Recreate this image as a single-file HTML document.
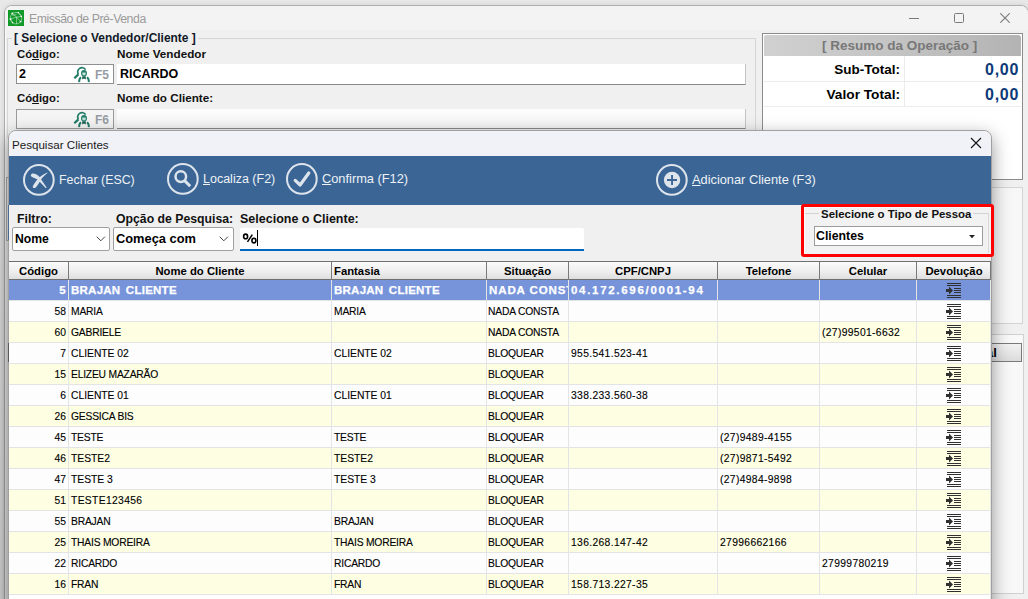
<!DOCTYPE html>
<html><head><meta charset="utf-8">
<style>
*{box-sizing:border-box}
html,body{margin:0;padding:0;width:1028px;height:599px;overflow:hidden;background:#e8e8e8;font-family:"Liberation Sans",sans-serif}
.a{position:absolute}
.t{position:absolute;white-space:nowrap;line-height:1}
.b{font-weight:bold}
#win{position:absolute;left:4px;top:5px;width:1025px;height:600px;background:#f0f0f0;border:1px solid #aeaeae;border-radius:8px 8px 0 0;box-shadow:0 0 5px rgba(0,0,0,0.10),inset 1px 1px 0 #fafafa}
.hd{font-size:11.3px;color:#000}
.cell{font-size:10.3px;color:#000;-webkit-text-stroke:0.12px #000}
.sel{font-size:11.5px;font-weight:bold;color:#fff;letter-spacing:0.25px;-webkit-text-stroke:0.25px #fff}
</style></head><body>
<div id="win"></div>
<div class="a" style="left:5px;top:6px;width:1023px;height:24px;background:#f3f3f3;border-radius:7px 7px 0 0"></div>

<!-- title bar -->
<svg class="a" style="left:8px;top:10px" width="16" height="16" viewBox="0 0 16 16"><rect width="16" height="16" fill="#11992a"/><g stroke="#fff" stroke-opacity="0.55" stroke-width="0.8" fill="none"><circle cx="8" cy="8.2" r="5.8"/><path d="M4.3 3.5L8.5 7L12.5 11.5M10.3 2.5L13.3 6.5L8.5 7L2.5 9L4.5 12.5M8.5 7V14M4.5 5.5L8.5 4.3"/></g><g fill="#fff"><circle cx="4.3" cy="3.5" r="0.9"/><circle cx="10.3" cy="2.6" r="0.8"/><circle cx="13.3" cy="6.5" r="0.8"/><circle cx="2.5" cy="9.2" r="0.9"/><circle cx="12.6" cy="11.6" r="0.9"/><circle cx="4.6" cy="12.6" r="0.8"/></g></svg>
<div class="t" style="left:29px;top:13px;font-size:12.3px;letter-spacing:-0.45px;color:#9b9b9b">Emissão de Pré-Venda</div>

<!-- window controls -->
<div class="a" style="left:909px;top:18px;width:10px;height:1px;background:#7a7a7a"></div>
<div class="a" style="left:954px;top:13px;width:10px;height:10px;border:1px solid #7a7a7a;border-radius:1.5px"></div>
<svg class="a" style="left:1000px;top:13px" width="10" height="10"><path d="M0.3 0.3L9.7 9.7M9.7 0.3L0.3 9.7" stroke="#7a7a7a" stroke-width="1.1"/></svg>

<!-- group box vendedor/cliente -->
<div class="a" style="left:7px;top:38px;width:749px;height:100px;border:1px solid #d6d6d6"></div>
<div class="t b" style="left:12px;top:33px;font-size:11.95px;color:#101828;background:#f0f0f0;padding:0 2px">[ Selecione o Vendedor/Cliente ]</div>

<div class="t b" style="left:17px;top:49px;font-size:11.3px;color:#111">Có<u>d</u>igo:</div>
<div class="t b" style="left:117px;top:48px;font-size:11.7px;color:#111">Nome Vendedor</div>
<div class="a" style="left:16px;top:64px;width:98px;height:20px;background:#fff;border:1px solid #8f8f8f"></div>
<div class="t b" style="left:19px;top:68px;font-size:12.5px;color:#000">2</div>
<svg class="a" style="left:73px;top:65px" width="18" height="18" viewBox="0 0 18 18"><path d="M5.4 9.4A4.3 4.3 0 1 1 12.6 4.6" fill="none" stroke="#1f7a66" stroke-width="1.7"/><path d="M1.3 13.3L5.4 9.4" stroke="#1f7a66" stroke-width="2.2"/><ellipse cx="11" cy="8.3" rx="2.4" ry="2.8" fill="#bfe3d8" stroke="#1f7a66" stroke-width="1.1"/><path d="M8.6 7.4C8.8 5.6 13.2 5.6 13.4 7.4Z" fill="#1f7a66"/><path d="M6.2 17.2C6 14.8 6.6 13.2 8 12.2M15.8 17.2C16 14.8 15.4 13.2 14 12.2" fill="none" stroke="#1f7a66" stroke-width="1.9"/><path d="M9.2 11.6H12.8V14.6L11 13.4L9.2 14.6Z" fill="#1a5e50"/></svg>
<div class="t b" style="left:95px;top:69px;font-size:12px;color:#979ca4">F5</div>
<div class="a" style="left:117px;top:64px;width:629px;height:21px;background:#fff;border-bottom:1px solid #8a8a8a;border-right:1px solid #c4c4c4"></div>
<div class="t b" style="left:120px;top:68px;font-size:12.5px;color:#000">RICARDO</div>

<div class="t b" style="left:17px;top:93px;font-size:11.3px;color:#111">Có<u>d</u>igo:</div>
<div class="t b" style="left:117px;top:92px;font-size:11.7px;color:#111">Nome do Cliente:</div>
<div class="a" style="left:16px;top:109px;width:98px;height:20px;background:#f4f4f4;border:1px solid #9a9a9a"></div>
<svg class="a" style="left:73px;top:110px" width="18" height="18" viewBox="0 0 18 18"><path d="M5.4 9.4A4.3 4.3 0 1 1 12.6 4.6" fill="none" stroke="#1f7a66" stroke-width="1.7"/><path d="M1.3 13.3L5.4 9.4" stroke="#1f7a66" stroke-width="2.2"/><ellipse cx="11" cy="8.3" rx="2.4" ry="2.8" fill="#bfe3d8" stroke="#1f7a66" stroke-width="1.1"/><path d="M8.6 7.4C8.8 5.6 13.2 5.6 13.4 7.4Z" fill="#1f7a66"/><path d="M6.2 17.2C6 14.8 6.6 13.2 8 12.2M15.8 17.2C16 14.8 15.4 13.2 14 12.2" fill="none" stroke="#1f7a66" stroke-width="1.9"/><path d="M9.2 11.6H12.8V14.6L11 13.4L9.2 14.6Z" fill="#1a5e50"/></svg>
<div class="t b" style="left:95px;top:114px;font-size:12px;color:#979ca4">F6</div>
<div class="a" style="left:117px;top:109px;width:629px;height:20px;background:linear-gradient(#fdfdfd,#f4f4f4);border-bottom:1px solid #8a8a8a;border-right:1px solid #c4c4c4"></div>

<!-- resumo panel -->
<div class="a" style="left:762px;top:33px;width:261px;height:147px;background:#fff;border:1px solid #8c8c8c"></div>
<div class="a" style="left:764px;top:35px;width:257px;height:21px;background:linear-gradient(90deg,#d0d0d0,#c4c4c4 50%,#b3b3b3);border-radius:2px 3px 0 0"></div>
<div class="t b" style="left:822px;top:39px;font-size:13.5px;color:#787878">[ Resumo da Operação ]</div>
<div class="a" style="left:764px;top:81px;width:257px;height:1px;background:#ececec"></div>
<div class="a" style="left:764px;top:106px;width:257px;height:1px;background:#ececec"></div>
<div class="a" style="left:904px;top:56px;width:1px;height:50px;background:#ececec"></div>
<div class="t b" style="right:128px;top:63px;font-size:13.5px;color:#000">Sub-Total:</div>
<div class="t b" style="right:128px;top:88px;font-size:13.7px;color:#000">Valor Total:</div>
<div class="t b" style="right:9px;top:62px;font-size:16px;letter-spacing:0.7px;color:#0d3a78">0,00</div>
<div class="t b" style="right:9px;top:87px;font-size:16px;letter-spacing:0.7px;color:#0d3a78">0,00</div>

<!-- panels behind dialog on right -->
<div class="a" style="left:762px;top:187px;width:261px;height:137px;border:1px solid #d4d4d4;background:#f7f7f7"></div>
<div class="a" style="left:762px;top:334px;width:262px;height:260px;border:1px solid #d0d0d0;background:#f8f8f8"></div>
<div class="a" style="left:900px;top:343px;width:122px;height:19px;border:1px solid #7a7a7a;background:linear-gradient(#f2f2f2,#dcdcdc)"></div>
<div class="t b" style="left:966.7px;top:346px;font-size:13px;color:#000">Total</div>

<!-- DIALOG -->
<div id="dlg" class="a" style="left:8px;top:130px;width:984px;height:480px;background:#f0f0f0;border:1px solid #a0a0a0;border-radius:8px 8px 0 0;box-shadow:0 6px 18px rgba(0,0,0,0.42);overflow:hidden">
</div>


<div class="a" style="left:0;top:128px;width:8px;height:471px;background:linear-gradient(rgba(0,0,0,0.0),rgba(0,0,0,0.05) 30%,rgba(0,0,0,0.1))"></div>
<div class="a" style="left:6px;top:177px;width:3px;height:64px;border:1px solid #8a8a8a;border-right:none"></div>
<div class="a" style="left:8px;top:343px;width:1px;height:19px;background:#5a5a5a"></div>
<!-- dialog title -->
<div class="a" style="left:9px;top:131px;width:982px;height:25px;background:#f1f2f7;border-radius:7px 7px 0 0"></div>
<div class="t" style="left:12px;top:138.5px;font-size:11.6px;color:#1a1a1a">Pesquisar Clientes</div>
<svg class="a" style="left:970px;top:137px" width="12" height="12"><path d="M1 1L11 11M11 1L1 11" stroke="#111" stroke-width="1.1"/></svg>

<!-- toolbar -->
<div class="a" style="left:9px;top:156px;width:982px;height:49px;background:#3a6595"></div>
<svg class="a" style="left:22px;top:163px" width="34" height="34" viewBox="0 0 34 34"><circle cx="16.85" cy="16.95" r="14.85" fill="none" stroke="#dde4ec" stroke-width="2"/><path d="M8.8 12C9.3 9.4 13.8 10 17.2 13.4L24.6 24.4C24.4 25 23.8 25.1 23.4 24.7L15.8 16.8C12.8 14.6 8.5 14.6 8.8 12Z" fill="#dde4ec"/><path d="M26.2 9.2C23 10.4 19.6 12.4 17.2 14.4C14.4 17.2 12 20.4 10.8 23.2C10.4 25.2 12.6 25.8 14 24.2C16.2 21.6 17.8 18.8 19 16.6C21 13.8 23.6 11.4 26.2 9.2Z" fill="#dde4ec"/></svg>
<div class="t" style="left:59px;top:174px;font-size:12.4px;color:#eef2f6">Fechar (ESC)</div>
<svg class="a" style="left:166px;top:162px" width="34" height="34" viewBox="0 0 34 34"><circle cx="16.85" cy="16.95" r="14.85" fill="none" stroke="#dde4ec" stroke-width="2"/><circle cx="14.8" cy="14.6" r="5.3" fill="none" stroke="#dde4ec" stroke-width="2.5"/><path d="M18.6 18.6L24.2 24.2" stroke="#dde4ec" stroke-width="3"/></svg>
<div class="t" style="left:203px;top:173px;font-size:12.5px;color:#eef2f6"><u>L</u>ocaliza (F2)</div>
<svg class="a" style="left:285px;top:162px" width="34" height="34" viewBox="0 0 34 34"><circle cx="16.85" cy="16.95" r="14.85" fill="none" stroke="#dde4ec" stroke-width="2"/><path d="M10.2 18.4L15.1 23L23.8 11" fill="none" stroke="#dde4ec" stroke-width="3.2" stroke-linecap="round" stroke-linejoin="round"/></svg>
<div class="t" style="left:322px;top:173px;font-size:12.8px;color:#eef2f6"><u>C</u>onfirma (F12)</div>
<svg class="a" style="left:655px;top:163px" width="34" height="34" viewBox="0 0 34 34"><circle cx="16.85" cy="16.95" r="14.85" fill="none" stroke="#dde4ec" stroke-width="2"/><circle cx="17.05" cy="17" r="8.2" fill="#dde4ec"/><path d="M17.05 12V22M12 17H22" stroke="#3a6595" stroke-width="1.9"/></svg>
<div class="t" style="left:692px;top:174px;font-size:12.8px;color:#eef2f6"><u>A</u>dicionar Cliente (F3)</div>

<!-- filter row -->
<div class="t b" style="left:17px;top:213px;font-size:12.3px;color:#111">Filtro:</div>
<div class="t b" style="left:116px;top:213px;font-size:12.25px;color:#111">Opção de Pesquisa:</div>
<div class="t b" style="left:240px;top:213px;font-size:12.5px;color:#111">Selecione o Cliente:</div>
<div class="a" style="left:12px;top:227px;width:98px;height:24px;background:#fff;border:1px solid #a0a0a0;border-radius:2px"></div>
<div class="t b" style="left:15px;top:233px;font-size:12.2px;color:#000">Nome</div>
<svg class="a" style="left:96px;top:236px" width="10" height="6"><path d="M0.7 0.7L4.8 4.8L8.9 0.7" fill="none" stroke="#444" stroke-width="1"/></svg>
<div class="a" style="left:113px;top:227px;width:121px;height:24px;background:#fff;border:1px solid #a0a0a0;border-radius:2px"></div>
<div class="t b" style="left:116px;top:233px;font-size:12.85px;color:#000">Começa com</div>
<svg class="a" style="left:219px;top:236px" width="10" height="6"><path d="M0.7 0.7L4.8 4.8L8.9 0.7" fill="none" stroke="#444" stroke-width="1"/></svg>
<div class="a" style="left:240px;top:228px;width:344px;height:23px;background:#fff;border-bottom:2px solid #0067c0;border-radius:2px 2px 0 0"></div>
<svg class="a" style="left:242px;top:232px" width="16" height="13" viewBox="0 0 16 13"><ellipse cx="3.6" cy="4.4" rx="2" ry="2.3" fill="none" stroke="#000" stroke-width="1.6"/><ellipse cx="11.9" cy="8.6" rx="2" ry="2.3" fill="none" stroke="#000" stroke-width="1.6"/><path d="M5.5 9.8L10.3 2.6" stroke="#000" stroke-width="1.5"/></svg>
<div class="a" style="left:257px;top:230px;width:1.3px;height:16px;background:#000"></div>

<!-- GRID -->
<div class="a" style="left:9px;top:261px;width:982px;height:338px;background:#fefefe"></div>
<div class="a" style="left:9px;top:261px;width:982px;height:19px;border-top:1px solid #6f6f6f;border-bottom:1px solid #6f6f6f;background:linear-gradient(#fbfbfb,#ededed 60%,#dedede)"></div>
<div class="t b hd" style="left:9px;width:59px;text-align:center;top:266px">Código</div>
<div class="t b hd" style="left:69px;width:262px;text-align:center;top:266px">Nome do Cliente</div>
<div class="t b hd" style="left:334px;top:266px">Fantasia</div>
<div class="t b hd" style="left:487px;width:81px;text-align:center;top:266px">Situação</div>
<div class="t b hd" style="left:569px;width:148px;text-align:center;top:266px">CPF/CNPJ</div>
<div class="t b hd" style="left:718px;width:101px;text-align:center;top:266px">Telefone</div>
<div class="t b hd" style="left:820px;width:96px;text-align:center;top:266px">Celular</div>
<div class="t b hd" style="left:917px;width:74px;text-align:center;top:266px">Devolução</div>
<div class="a" style="left:9px;top:280px;width:982px;height:20px;background:#7794db"></div>
<div class="a" style="left:9px;top:300px;width:982px;height:1px;background:#e3e4e6"></div>
<div class="t sel" style="right:962px;top:285px">5</div>
<div class="t sel" style="left:71px;top:285px;word-spacing:2px;">BRAJAN CLIENTE</div>
<div class="t sel" style="left:334px;top:285px;word-spacing:2px;">BRAJAN CLIENTE</div>
<div class="t sel" style="left:489px;top:285px;width:79px;overflow:hidden;letter-spacing:0.9px">NADA CONSTA</div>
<div class="t sel" style="left:571px;top:285px;letter-spacing:1.7px;">04.172.696/0001-94</div>
<svg class="a" style="left:945px;top:282px" width="17" height="17" viewBox="0 0 17 17"><path d="M2 1.5H16M2 3.5H16M9 6.5H16M9 8.5H16M9 10.5H16M2 13.5H16M2 15.5H16" stroke="#303030" stroke-width="1"/><path d="M1 7H4V4.5L8 8.5L4 12.5V10H1Z" fill="#303030"/></svg>
<div class="a" style="left:9px;top:301px;width:982px;height:20px;background:#fdfdfd"></div>
<div class="a" style="left:9px;top:321px;width:982px;height:1px;background:#e3e4e6"></div>
<div class="t cell" style="right:962px;top:307px">58</div>
<div class="t cell" style="left:71px;top:307px;letter-spacing:-0.2px;">MARIA</div>
<div class="t cell" style="left:334px;top:307px;letter-spacing:-0.2px;">MARIA</div>
<div class="t cell" style="left:488px;top:307px;letter-spacing:-0.2px;">NADA CONSTA</div>
<svg class="a" style="left:945px;top:303px" width="17" height="17" viewBox="0 0 17 17"><path d="M2 1.5H16M2 3.5H16M9 6.5H16M9 8.5H16M9 10.5H16M2 13.5H16M2 15.5H16" stroke="#303030" stroke-width="1"/><path d="M1 7H4V4.5L8 8.5L4 12.5V10H1Z" fill="#303030"/></svg>
<div class="a" style="left:9px;top:322px;width:982px;height:20px;background:#fefee3"></div>
<div class="a" style="left:9px;top:342px;width:982px;height:1px;background:#e3e4e6"></div>
<div class="t cell" style="right:962px;top:328px">60</div>
<div class="t cell" style="left:71px;top:328px;letter-spacing:-0.2px;">GABRIELE</div>
<div class="t cell" style="left:488px;top:328px;letter-spacing:-0.2px;">NADA CONSTA</div>
<div class="t cell" style="left:822px;top:328px;letter-spacing:0.35px;">(27)99501-6632</div>
<svg class="a" style="left:945px;top:324px" width="17" height="17" viewBox="0 0 17 17"><path d="M2 1.5H16M2 3.5H16M9 6.5H16M9 8.5H16M9 10.5H16M2 13.5H16M2 15.5H16" stroke="#303030" stroke-width="1"/><path d="M1 7H4V4.5L8 8.5L4 12.5V10H1Z" fill="#303030"/></svg>
<div class="a" style="left:9px;top:343px;width:982px;height:20px;background:#fdfdfd"></div>
<div class="a" style="left:9px;top:363px;width:982px;height:1px;background:#e3e4e6"></div>
<div class="t cell" style="right:962px;top:349px">7</div>
<div class="t cell" style="left:71px;top:349px;">CLIENTE 02</div>
<div class="t cell" style="left:334px;top:349px;">CLIENTE 02</div>
<div class="t cell" style="left:488px;top:349px;letter-spacing:-0.2px;">BLOQUEAR</div>
<div class="t cell" style="left:571px;top:349px;letter-spacing:0.35px;">955.541.523-41</div>
<svg class="a" style="left:945px;top:345px" width="17" height="17" viewBox="0 0 17 17"><path d="M2 1.5H16M2 3.5H16M9 6.5H16M9 8.5H16M9 10.5H16M2 13.5H16M2 15.5H16" stroke="#303030" stroke-width="1"/><path d="M1 7H4V4.5L8 8.5L4 12.5V10H1Z" fill="#303030"/></svg>
<div class="a" style="left:9px;top:364px;width:982px;height:20px;background:#fefee3"></div>
<div class="a" style="left:9px;top:384px;width:982px;height:1px;background:#e3e4e6"></div>
<div class="t cell" style="right:962px;top:370px">15</div>
<div class="t cell" style="left:71px;top:370px;letter-spacing:-0.2px;">ELIZEU MAZARÃO</div>
<div class="t cell" style="left:488px;top:370px;letter-spacing:-0.2px;">BLOQUEAR</div>
<svg class="a" style="left:945px;top:366px" width="17" height="17" viewBox="0 0 17 17"><path d="M2 1.5H16M2 3.5H16M9 6.5H16M9 8.5H16M9 10.5H16M2 13.5H16M2 15.5H16" stroke="#303030" stroke-width="1"/><path d="M1 7H4V4.5L8 8.5L4 12.5V10H1Z" fill="#303030"/></svg>
<div class="a" style="left:9px;top:385px;width:982px;height:20px;background:#fdfdfd"></div>
<div class="a" style="left:9px;top:405px;width:982px;height:1px;background:#e3e4e6"></div>
<div class="t cell" style="right:962px;top:391px">6</div>
<div class="t cell" style="left:71px;top:391px;">CLIENTE 01</div>
<div class="t cell" style="left:334px;top:391px;">CLIENTE 01</div>
<div class="t cell" style="left:488px;top:391px;letter-spacing:-0.2px;">BLOQUEAR</div>
<div class="t cell" style="left:571px;top:391px;letter-spacing:0.35px;">338.233.560-38</div>
<svg class="a" style="left:945px;top:387px" width="17" height="17" viewBox="0 0 17 17"><path d="M2 1.5H16M2 3.5H16M9 6.5H16M9 8.5H16M9 10.5H16M2 13.5H16M2 15.5H16" stroke="#303030" stroke-width="1"/><path d="M1 7H4V4.5L8 8.5L4 12.5V10H1Z" fill="#303030"/></svg>
<div class="a" style="left:9px;top:406px;width:982px;height:20px;background:#fefee3"></div>
<div class="a" style="left:9px;top:426px;width:982px;height:1px;background:#e3e4e6"></div>
<div class="t cell" style="right:962px;top:412px">26</div>
<div class="t cell" style="left:71px;top:412px;letter-spacing:-0.2px;">GESSICA BIS</div>
<div class="t cell" style="left:488px;top:412px;letter-spacing:-0.2px;">BLOQUEAR</div>
<svg class="a" style="left:945px;top:408px" width="17" height="17" viewBox="0 0 17 17"><path d="M2 1.5H16M2 3.5H16M9 6.5H16M9 8.5H16M9 10.5H16M2 13.5H16M2 15.5H16" stroke="#303030" stroke-width="1"/><path d="M1 7H4V4.5L8 8.5L4 12.5V10H1Z" fill="#303030"/></svg>
<div class="a" style="left:9px;top:427px;width:982px;height:20px;background:#fdfdfd"></div>
<div class="a" style="left:9px;top:447px;width:982px;height:1px;background:#e3e4e6"></div>
<div class="t cell" style="right:962px;top:433px">45</div>
<div class="t cell" style="left:71px;top:433px;letter-spacing:-0.2px;">TESTE</div>
<div class="t cell" style="left:334px;top:433px;letter-spacing:-0.2px;">TESTE</div>
<div class="t cell" style="left:488px;top:433px;letter-spacing:-0.2px;">BLOQUEAR</div>
<div class="t cell" style="left:720px;top:433px;letter-spacing:0.35px;">(27)9489-4155</div>
<svg class="a" style="left:945px;top:429px" width="17" height="17" viewBox="0 0 17 17"><path d="M2 1.5H16M2 3.5H16M9 6.5H16M9 8.5H16M9 10.5H16M2 13.5H16M2 15.5H16" stroke="#303030" stroke-width="1"/><path d="M1 7H4V4.5L8 8.5L4 12.5V10H1Z" fill="#303030"/></svg>
<div class="a" style="left:9px;top:448px;width:982px;height:20px;background:#fefee3"></div>
<div class="a" style="left:9px;top:468px;width:982px;height:1px;background:#e3e4e6"></div>
<div class="t cell" style="right:962px;top:454px">46</div>
<div class="t cell" style="left:71px;top:454px;">TESTE2</div>
<div class="t cell" style="left:334px;top:454px;">TESTE2</div>
<div class="t cell" style="left:488px;top:454px;letter-spacing:-0.2px;">BLOQUEAR</div>
<div class="t cell" style="left:720px;top:454px;letter-spacing:0.35px;">(27)9871-5492</div>
<svg class="a" style="left:945px;top:450px" width="17" height="17" viewBox="0 0 17 17"><path d="M2 1.5H16M2 3.5H16M9 6.5H16M9 8.5H16M9 10.5H16M2 13.5H16M2 15.5H16" stroke="#303030" stroke-width="1"/><path d="M1 7H4V4.5L8 8.5L4 12.5V10H1Z" fill="#303030"/></svg>
<div class="a" style="left:9px;top:469px;width:982px;height:20px;background:#fdfdfd"></div>
<div class="a" style="left:9px;top:489px;width:982px;height:1px;background:#e3e4e6"></div>
<div class="t cell" style="right:962px;top:475px">47</div>
<div class="t cell" style="left:71px;top:475px;">TESTE 3</div>
<div class="t cell" style="left:334px;top:475px;">TESTE 3</div>
<div class="t cell" style="left:488px;top:475px;letter-spacing:-0.2px;">BLOQUEAR</div>
<div class="t cell" style="left:720px;top:475px;letter-spacing:0.35px;">(27)4984-9898</div>
<svg class="a" style="left:945px;top:471px" width="17" height="17" viewBox="0 0 17 17"><path d="M2 1.5H16M2 3.5H16M9 6.5H16M9 8.5H16M9 10.5H16M2 13.5H16M2 15.5H16" stroke="#303030" stroke-width="1"/><path d="M1 7H4V4.5L8 8.5L4 12.5V10H1Z" fill="#303030"/></svg>
<div class="a" style="left:9px;top:490px;width:982px;height:20px;background:#fefee3"></div>
<div class="a" style="left:9px;top:510px;width:982px;height:1px;background:#e3e4e6"></div>
<div class="t cell" style="right:962px;top:496px">51</div>
<div class="t cell" style="left:71px;top:496px;letter-spacing:0.35px;">TESTE123456</div>
<div class="t cell" style="left:488px;top:496px;letter-spacing:-0.2px;">BLOQUEAR</div>
<svg class="a" style="left:945px;top:492px" width="17" height="17" viewBox="0 0 17 17"><path d="M2 1.5H16M2 3.5H16M9 6.5H16M9 8.5H16M9 10.5H16M2 13.5H16M2 15.5H16" stroke="#303030" stroke-width="1"/><path d="M1 7H4V4.5L8 8.5L4 12.5V10H1Z" fill="#303030"/></svg>
<div class="a" style="left:9px;top:511px;width:982px;height:20px;background:#fdfdfd"></div>
<div class="a" style="left:9px;top:531px;width:982px;height:1px;background:#e3e4e6"></div>
<div class="t cell" style="right:962px;top:517px">55</div>
<div class="t cell" style="left:71px;top:517px;letter-spacing:-0.2px;">BRAJAN</div>
<div class="t cell" style="left:334px;top:517px;letter-spacing:-0.2px;">BRAJAN</div>
<div class="t cell" style="left:488px;top:517px;letter-spacing:-0.2px;">BLOQUEAR</div>
<svg class="a" style="left:945px;top:513px" width="17" height="17" viewBox="0 0 17 17"><path d="M2 1.5H16M2 3.5H16M9 6.5H16M9 8.5H16M9 10.5H16M2 13.5H16M2 15.5H16" stroke="#303030" stroke-width="1"/><path d="M1 7H4V4.5L8 8.5L4 12.5V10H1Z" fill="#303030"/></svg>
<div class="a" style="left:9px;top:532px;width:982px;height:20px;background:#fefee3"></div>
<div class="a" style="left:9px;top:552px;width:982px;height:1px;background:#e3e4e6"></div>
<div class="t cell" style="right:962px;top:538px">25</div>
<div class="t cell" style="left:71px;top:538px;letter-spacing:-0.2px;">THAIS MOREIRA</div>
<div class="t cell" style="left:334px;top:538px;letter-spacing:-0.2px;">THAIS MOREIRA</div>
<div class="t cell" style="left:488px;top:538px;letter-spacing:-0.2px;">BLOQUEAR</div>
<div class="t cell" style="left:571px;top:538px;letter-spacing:0.35px;">136.268.147-42</div>
<div class="t cell" style="left:720px;top:538px;letter-spacing:0.35px;">27996662166</div>
<svg class="a" style="left:945px;top:534px" width="17" height="17" viewBox="0 0 17 17"><path d="M2 1.5H16M2 3.5H16M9 6.5H16M9 8.5H16M9 10.5H16M2 13.5H16M2 15.5H16" stroke="#303030" stroke-width="1"/><path d="M1 7H4V4.5L8 8.5L4 12.5V10H1Z" fill="#303030"/></svg>
<div class="a" style="left:9px;top:553px;width:982px;height:20px;background:#fdfdfd"></div>
<div class="a" style="left:9px;top:573px;width:982px;height:1px;background:#e3e4e6"></div>
<div class="t cell" style="right:962px;top:559px">22</div>
<div class="t cell" style="left:71px;top:559px;letter-spacing:-0.2px;">RICARDO</div>
<div class="t cell" style="left:334px;top:559px;letter-spacing:-0.2px;">RICARDO</div>
<div class="t cell" style="left:488px;top:559px;letter-spacing:-0.2px;">BLOQUEAR</div>
<div class="t cell" style="left:822px;top:559px;letter-spacing:0.35px;">27999780219</div>
<svg class="a" style="left:945px;top:555px" width="17" height="17" viewBox="0 0 17 17"><path d="M2 1.5H16M2 3.5H16M9 6.5H16M9 8.5H16M9 10.5H16M2 13.5H16M2 15.5H16" stroke="#303030" stroke-width="1"/><path d="M1 7H4V4.5L8 8.5L4 12.5V10H1Z" fill="#303030"/></svg>
<div class="a" style="left:9px;top:574px;width:982px;height:20px;background:#fefee3"></div>
<div class="a" style="left:9px;top:594px;width:982px;height:1px;background:#e3e4e6"></div>
<div class="t cell" style="right:962px;top:580px">16</div>
<div class="t cell" style="left:71px;top:580px;letter-spacing:-0.2px;">FRAN</div>
<div class="t cell" style="left:334px;top:580px;letter-spacing:-0.2px;">FRAN</div>
<div class="t cell" style="left:488px;top:580px;letter-spacing:-0.2px;">BLOQUEAR</div>
<div class="t cell" style="left:571px;top:580px;letter-spacing:0.35px;">158.713.227-35</div>
<svg class="a" style="left:945px;top:576px" width="17" height="17" viewBox="0 0 17 17"><path d="M2 1.5H16M2 3.5H16M9 6.5H16M9 8.5H16M9 10.5H16M2 13.5H16M2 15.5H16" stroke="#303030" stroke-width="1"/><path d="M1 7H4V4.5L8 8.5L4 12.5V10H1Z" fill="#303030"/></svg>
<div class="a" style="left:68px;top:262px;width:1px;height:18px;background:#7a7a7a"></div>
<div class="a" style="left:68px;top:280px;width:1px;height:315px;background:#e3e4e6"></div>
<div class="a" style="left:331px;top:262px;width:1px;height:18px;background:#7a7a7a"></div>
<div class="a" style="left:331px;top:280px;width:1px;height:315px;background:#e3e4e6"></div>
<div class="a" style="left:486px;top:262px;width:1px;height:18px;background:#7a7a7a"></div>
<div class="a" style="left:486px;top:280px;width:1px;height:315px;background:#e3e4e6"></div>
<div class="a" style="left:568px;top:262px;width:1px;height:18px;background:#7a7a7a"></div>
<div class="a" style="left:568px;top:280px;width:1px;height:315px;background:#e3e4e6"></div>
<div class="a" style="left:717px;top:262px;width:1px;height:18px;background:#7a7a7a"></div>
<div class="a" style="left:717px;top:280px;width:1px;height:315px;background:#e3e4e6"></div>
<div class="a" style="left:819px;top:262px;width:1px;height:18px;background:#7a7a7a"></div>
<div class="a" style="left:819px;top:280px;width:1px;height:315px;background:#e3e4e6"></div>
<div class="a" style="left:916px;top:262px;width:1px;height:18px;background:#7a7a7a"></div>
<div class="a" style="left:916px;top:280px;width:1px;height:315px;background:#e3e4e6"></div>
<!-- right grid edge --><div class="a" style="left:990px;top:261px;width:1px;height:19px;background:#777"></div><div class="a" style="left:990px;top:280px;width:1px;height:319px;background:#e6e6e6"></div>
<!-- /GRID -->
<div class="a" style="left:8px;top:205px;width:1px;height:35px;background:#4a6a90"></div>
<!-- tipo pessoa -->
<div class="a" style="left:804px;top:207px;width:188px;height:47px;background:#f2f2f2;border-left:1px solid #fafafa;border-top:1px solid #fafafa"></div><div class="a" style="left:805px;top:213px;width:184px;height:40px;border-top:1px solid #d2d2d2;border-right:1px solid #d8d8d8"></div>
<div class="t b" style="left:819px;top:209px;font-size:11.45px;color:#111;background:#f2f2f2;padding:0 2px">Selecione o Tipo de Pessoa</div>
<div class="a" style="left:814px;top:226px;width:169px;height:20px;background:#fff;border:1px solid #9c9c9c"></div>
<div class="t b" style="left:816px;top:230px;font-size:12.3px;color:#000">Clientes</div>
<svg class="a" style="left:969px;top:235px" width="6" height="4"><path d="M0 0H6L3 3.2Z" fill="#222"/></svg>
<div class="a" style="left:801px;top:204px;width:193px;height:53px;border:3px solid #ff0000;border-radius:3px"></div>

</body></html>
